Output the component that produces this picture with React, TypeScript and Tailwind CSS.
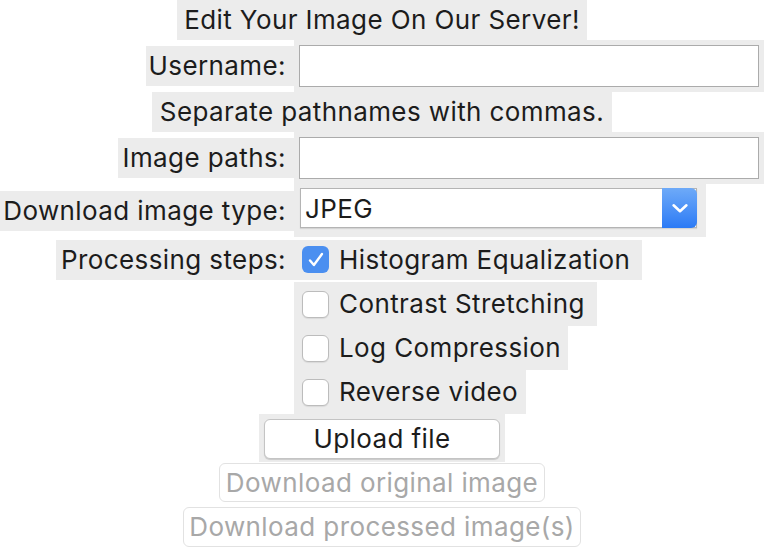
import type { ReactNode } from "react";

const panel = "bg-[#ececec]";

function LabelRow({
  label,
  labelWidth,
  height,
  children,
}: {
  label?: string;
  labelWidth?: string;
  height: string;
  children: ReactNode;
}) {
  return (
    <div className={`flex ${height}`}>
      <div className="flex w-[294px] shrink-0 items-center justify-end">
        {label ? (
          <div
            className={`flex h-10 items-center justify-end whitespace-nowrap pr-[8px] ${panel} ${labelWidth}`}
          >
            {label}
          </div>
        ) : null}
      </div>
      {children}
    </div>
  );
}

function TextField() {
  return (
    <div className={`flex-1 p-[5px] ${panel}`}>
      <input
        type="text"
        className="h-[42px] w-full border border-[#ababab] bg-white px-2 outline-none"
      />
    </div>
  );
}

function Check({
  label,
  checked,
  width,
  full,
}: {
  label: string;
  checked?: boolean;
  width: string;
  full?: boolean;
}) {
  return (
    <div
      className={`flex items-center gap-[10px] pl-[8px] ${panel} ${width} ${
        full ? "h-full" : "h-10 self-center"
      }`}
    >
      {checked ? (
        <span className="flex h-[27px] w-[27px] items-center justify-center rounded-[6px] bg-[#4b8ff0]">
          <svg viewBox="0 0 24 24" className="h-[22px] w-[22px]">
            <path
              d="M5.5 12.5l4.2 5L18.5 5.5"
              fill="none"
              stroke="white"
              strokeWidth="2.6"
              strokeLinecap="round"
              strokeLinejoin="round"
            />
          </svg>
        </span>
      ) : (
        <span className="h-[27px] w-[27px] rounded-[6px] border border-[#bcbcbc] bg-white shadow-[0_1px_1px_rgba(0,0,0,0.08)]" />
      )}
      <span className="whitespace-nowrap">{label}</span>
    </div>
  );
}

export default function App() {
  return (
    <div className="h-[548px] w-[764px] bg-white font-[Inter,'Liberation_Sans',sans-serif] text-[26px] leading-none tracking-[0.4px] text-[#1c1c1c]">
      <div className="flex justify-center">
        <div
          className={`flex h-10 w-[410px] items-center justify-center ${panel}`}
        >
          Edit Your Image On Our Server!
        </div>
      </div>

      <LabelRow label="Username:" labelWidth="w-[148px]" height="h-[52px]">
        <TextField />
      </LabelRow>

      <div className="flex justify-center">
        <div
          className={`flex h-10 w-[460px] items-center justify-center ${panel}`}
        >
          Separate pathnames with commas.
        </div>
      </div>

      <LabelRow label="Image paths:" labelWidth="w-[176px]" height="h-[52px]">
        <TextField />
      </LabelRow>

      <LabelRow
        label="Download image type:"
        labelWidth="w-[294px]"
        height="h-[53px]"
      >
        <div className={`w-[412px] pl-[6px] pt-[4px] ${panel}`}>
          <div className="flex h-10 w-[397px] border border-[#b4b4b4] bg-white shadow-[0_1px_1px_rgba(0,0,0,0.1)]">
            <div className="flex flex-1 items-center pl-[4px] pt-[2px]">
              JPEG
            </div>
            <div className="-my-px -mr-px flex w-[35px] items-center justify-center rounded-r-[6px] bg-gradient-to-b from-[#6eaaf8] to-[#2b7af5]">
              <svg viewBox="0 0 24 24" className="h-[22px] w-[22px]">
                <path
                  d="M5 9l7 6.5 7-6.5"
                  fill="none"
                  stroke="white"
                  strokeWidth="2.8"
                  strokeLinecap="round"
                  strokeLinejoin="round"
                />
              </svg>
            </div>
          </div>
        </div>
      </LabelRow>

      <LabelRow
        label="Processing steps:"
        labelWidth="w-[238px]"
        height="h-[45px]"
      >
        <Check label="Histogram Equalization" checked width="w-[348px]" />
      </LabelRow>
      <LabelRow height="h-[44px]">
        <Check label="Contrast Stretching" width="w-[303px]" full />
      </LabelRow>
      <LabelRow height="h-[44px]">
        <Check label="Log Compression" width="w-[274px]" full />
      </LabelRow>
      <LabelRow height="h-[44px]">
        <Check label="Reverse video" width="w-[232px]" full />
      </LabelRow>

      <div className="flex justify-center">
        <div className={`h-12 w-[246px] p-[5px] ${panel}`}>
          <button
            type="button"
            className="h-10 w-full rounded-[6px] border border-[#c4c4c4] bg-white shadow-[0_1px_1px_rgba(0,0,0,0.15)]"
          >
            Upload file
          </button>
        </div>
      </div>

      <div className="mt-px flex justify-center">
        <button
          type="button"
          disabled
          className="h-[39px] w-[326px] whitespace-nowrap rounded-[6px] border border-[#e2e2e2] bg-white text-[#a8a8a8]"
        >
          Download original image
        </button>
      </div>

      <div className="mt-[5px] flex justify-center">
        <button
          type="button"
          disabled
          className="h-10 w-[398px] whitespace-nowrap rounded-[6px] border border-[#e2e2e2] bg-white text-[#a8a8a8]"
        >
          Download processed image(s)
        </button>
      </div>
    </div>
  );
}
